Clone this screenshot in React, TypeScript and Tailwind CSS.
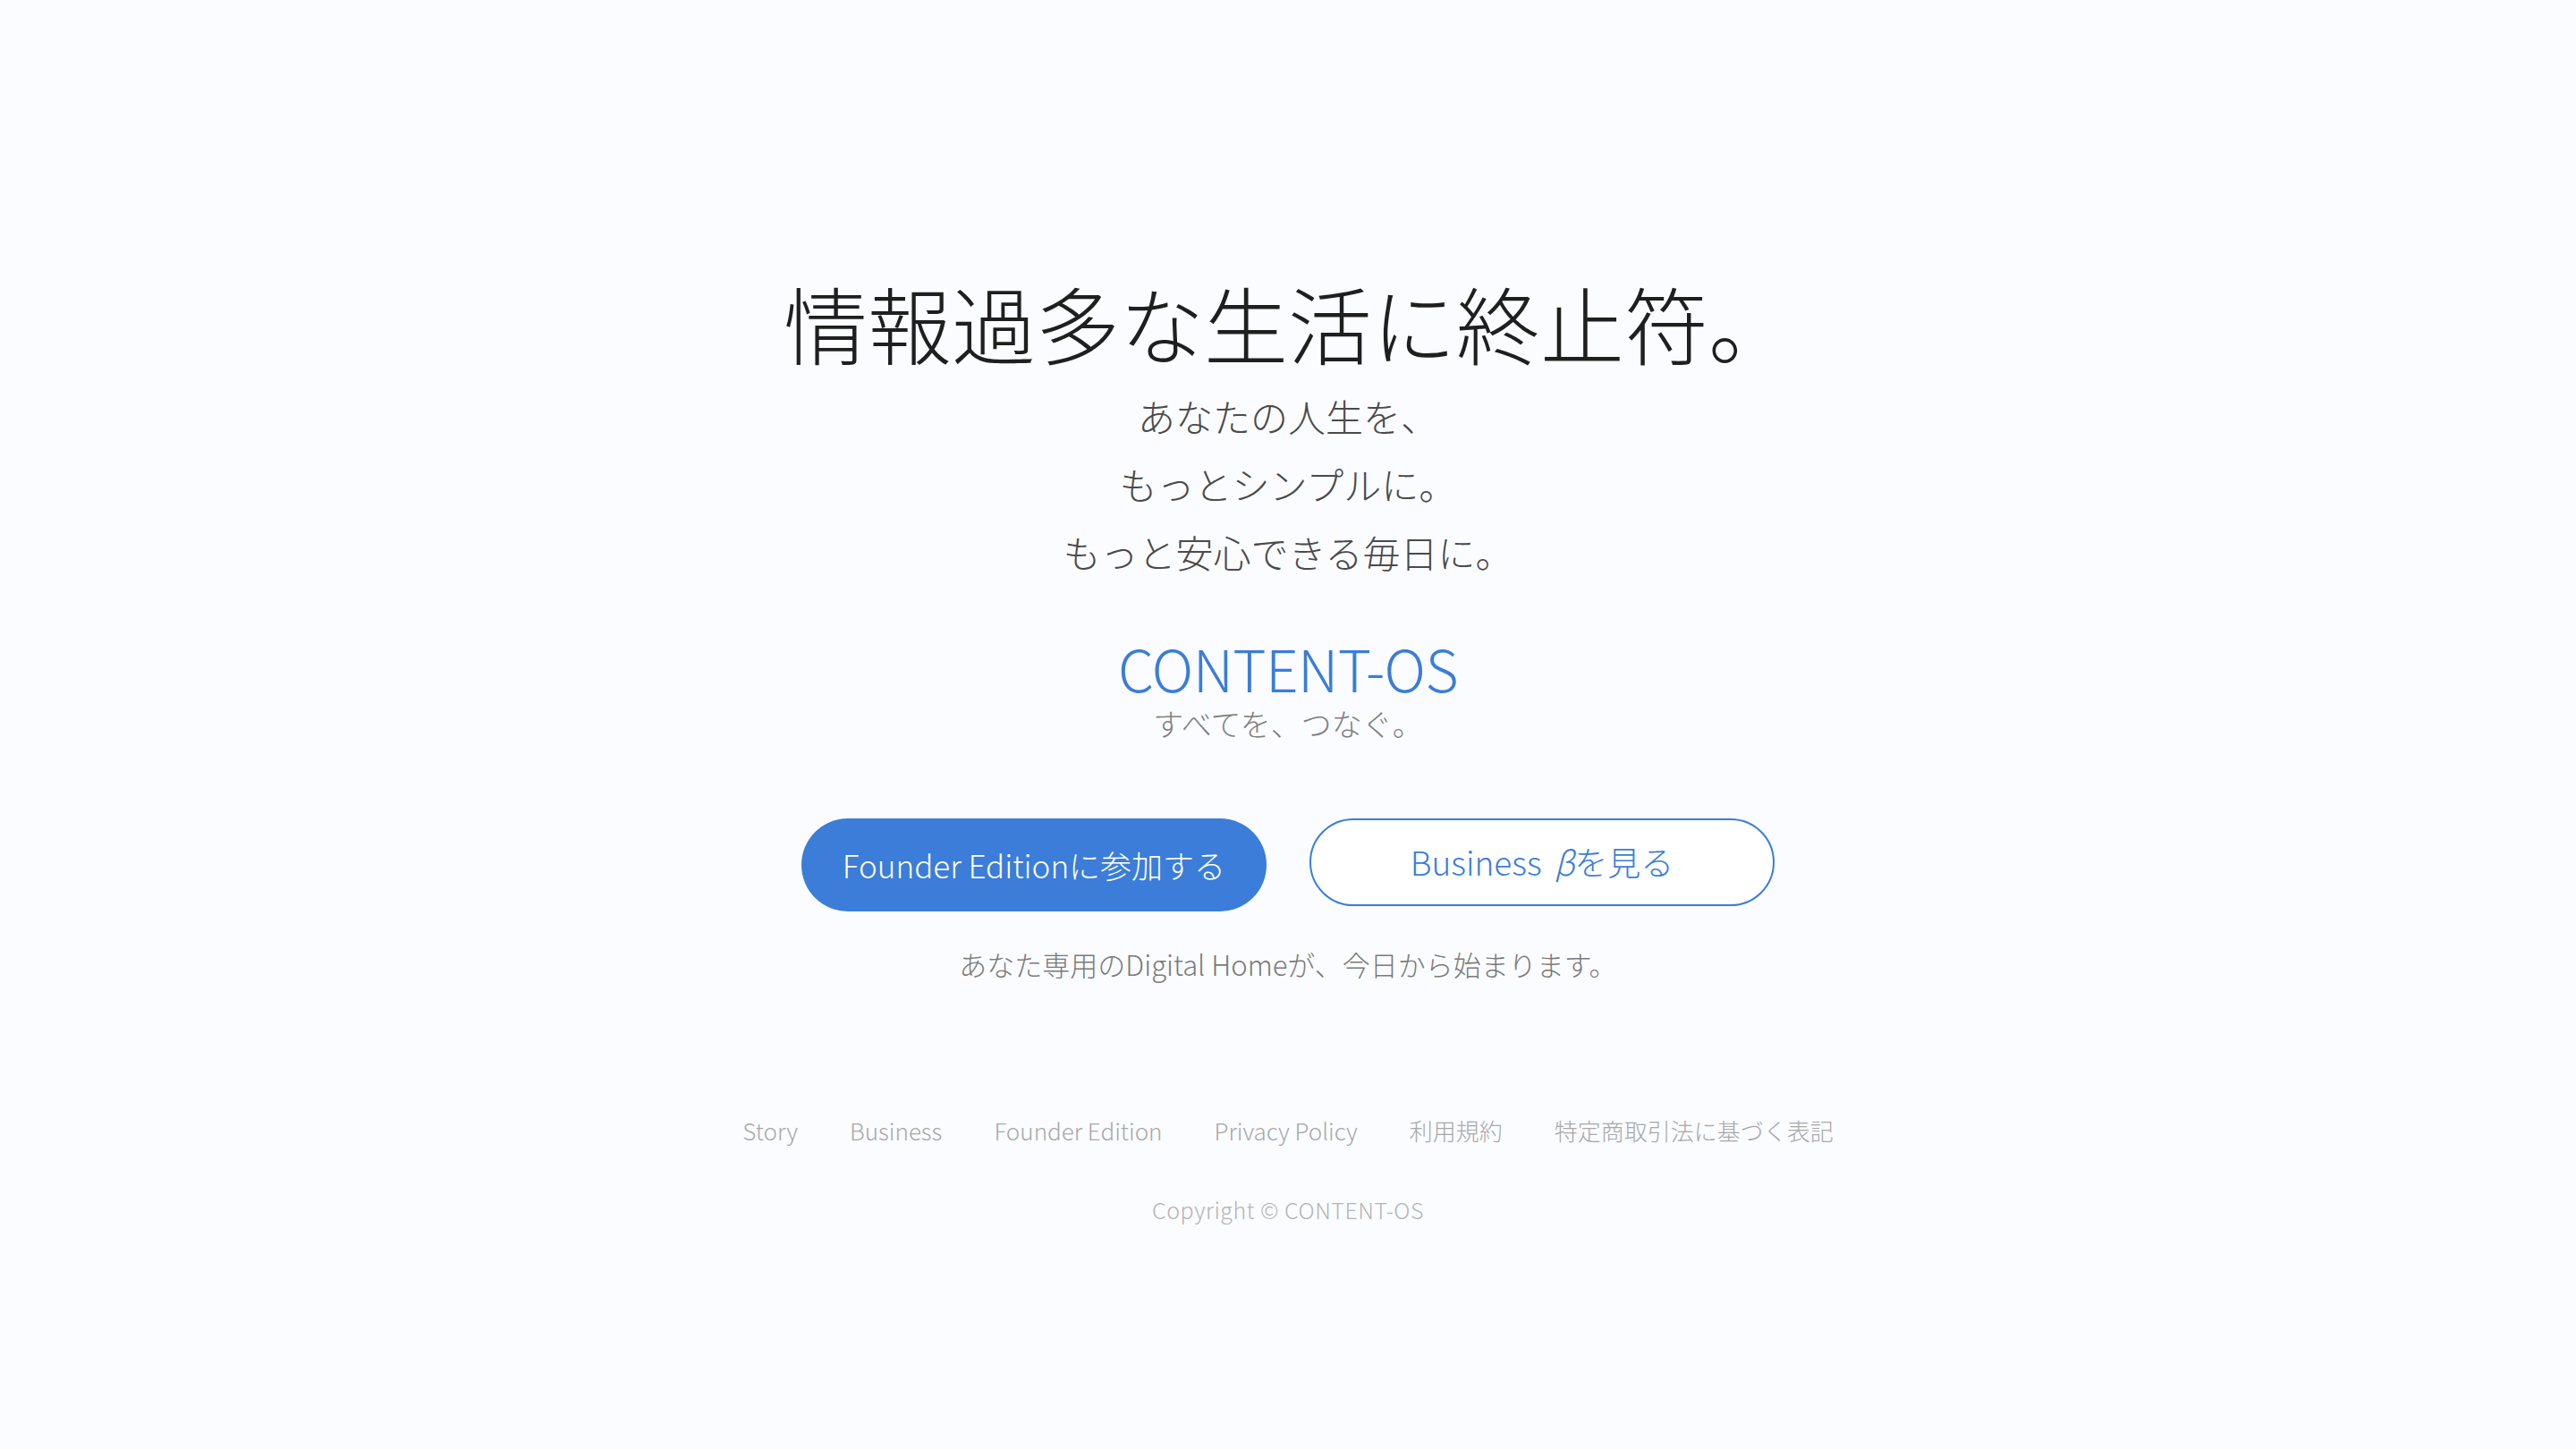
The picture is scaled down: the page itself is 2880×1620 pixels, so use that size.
import React from 'react';

const links = ['Story', 'Business', 'Founder Edition', 'Privacy Policy', '利用規約', '特定商取引法に基づく表記'];

const App: React.FC = () => {
  return (
    <div
      className="min-h-screen bg-[#fafcff] flex flex-col items-center pt-[298px] font-light"
      style={{ fontFamily: '"Noto Sans CJK JP", "Noto Sans", sans-serif' }}
    >
      <h1 className="text-[94px] leading-[125px] text-[#1f1f1f] font-light">
        情報過多な生活に終止符。
      </h1>
      <div className="mt-[4px] flex flex-col items-center text-[42px] leading-[76px] text-[#4a4a4a] font-light">
        <p>あなたの人生を、</p>
        <p>もっとシンプルに。</p>
        <p>もっと安心できる毎日に。</p>
      </div>

      <div className="mt-[59px] flex flex-col items-center">
        <div className="text-[64px] leading-[64px] text-[#3b7dd8] font-light tracking-[-0.01em]">CONTENT-OS</div>
        <div className="mt-[9px] text-[34px] leading-[44px] text-[#808080] font-light">すべてを、つなぐ。</div>
      </div>

      <div className="mt-[84px] flex items-start gap-[48px]">
        <button className="w-[520px] h-[104px] rounded-full bg-[#3b7dd8] text-white text-[35px] font-light">
          Founder Editionに参加する
        </button>
        <button className="w-[520px] h-[98px] rounded-full border-2 border-[#3b7dd8] bg-white text-[#3b7dd8] text-[37px] font-light">
          Business <span className="italic ml-[6px]">β</span>を見る
        </button>
      </div>

      <p className="mt-[35px] text-[31px] leading-[48px] text-[#7a7a7a] font-light">
        あなた専用のDigital Homeが、今日から始まります。
      </p>

      <footer className="mt-[142px] flex flex-col items-center">
        <nav className="flex items-center gap-[58px] text-[26px] leading-[40px] text-[#a8a8a8] font-light">
          {links.map((l) => (
            <a key={l} href="#">{l}</a>
          ))}
        </nav>
        <p className="mt-[50px] text-[25px] leading-[36px] text-[#b4b4b4] font-light tracking-[0.02em]">
          Copyright © CONTENT-OS
        </p>
      </footer>
    </div>
  );
};

export default App;
